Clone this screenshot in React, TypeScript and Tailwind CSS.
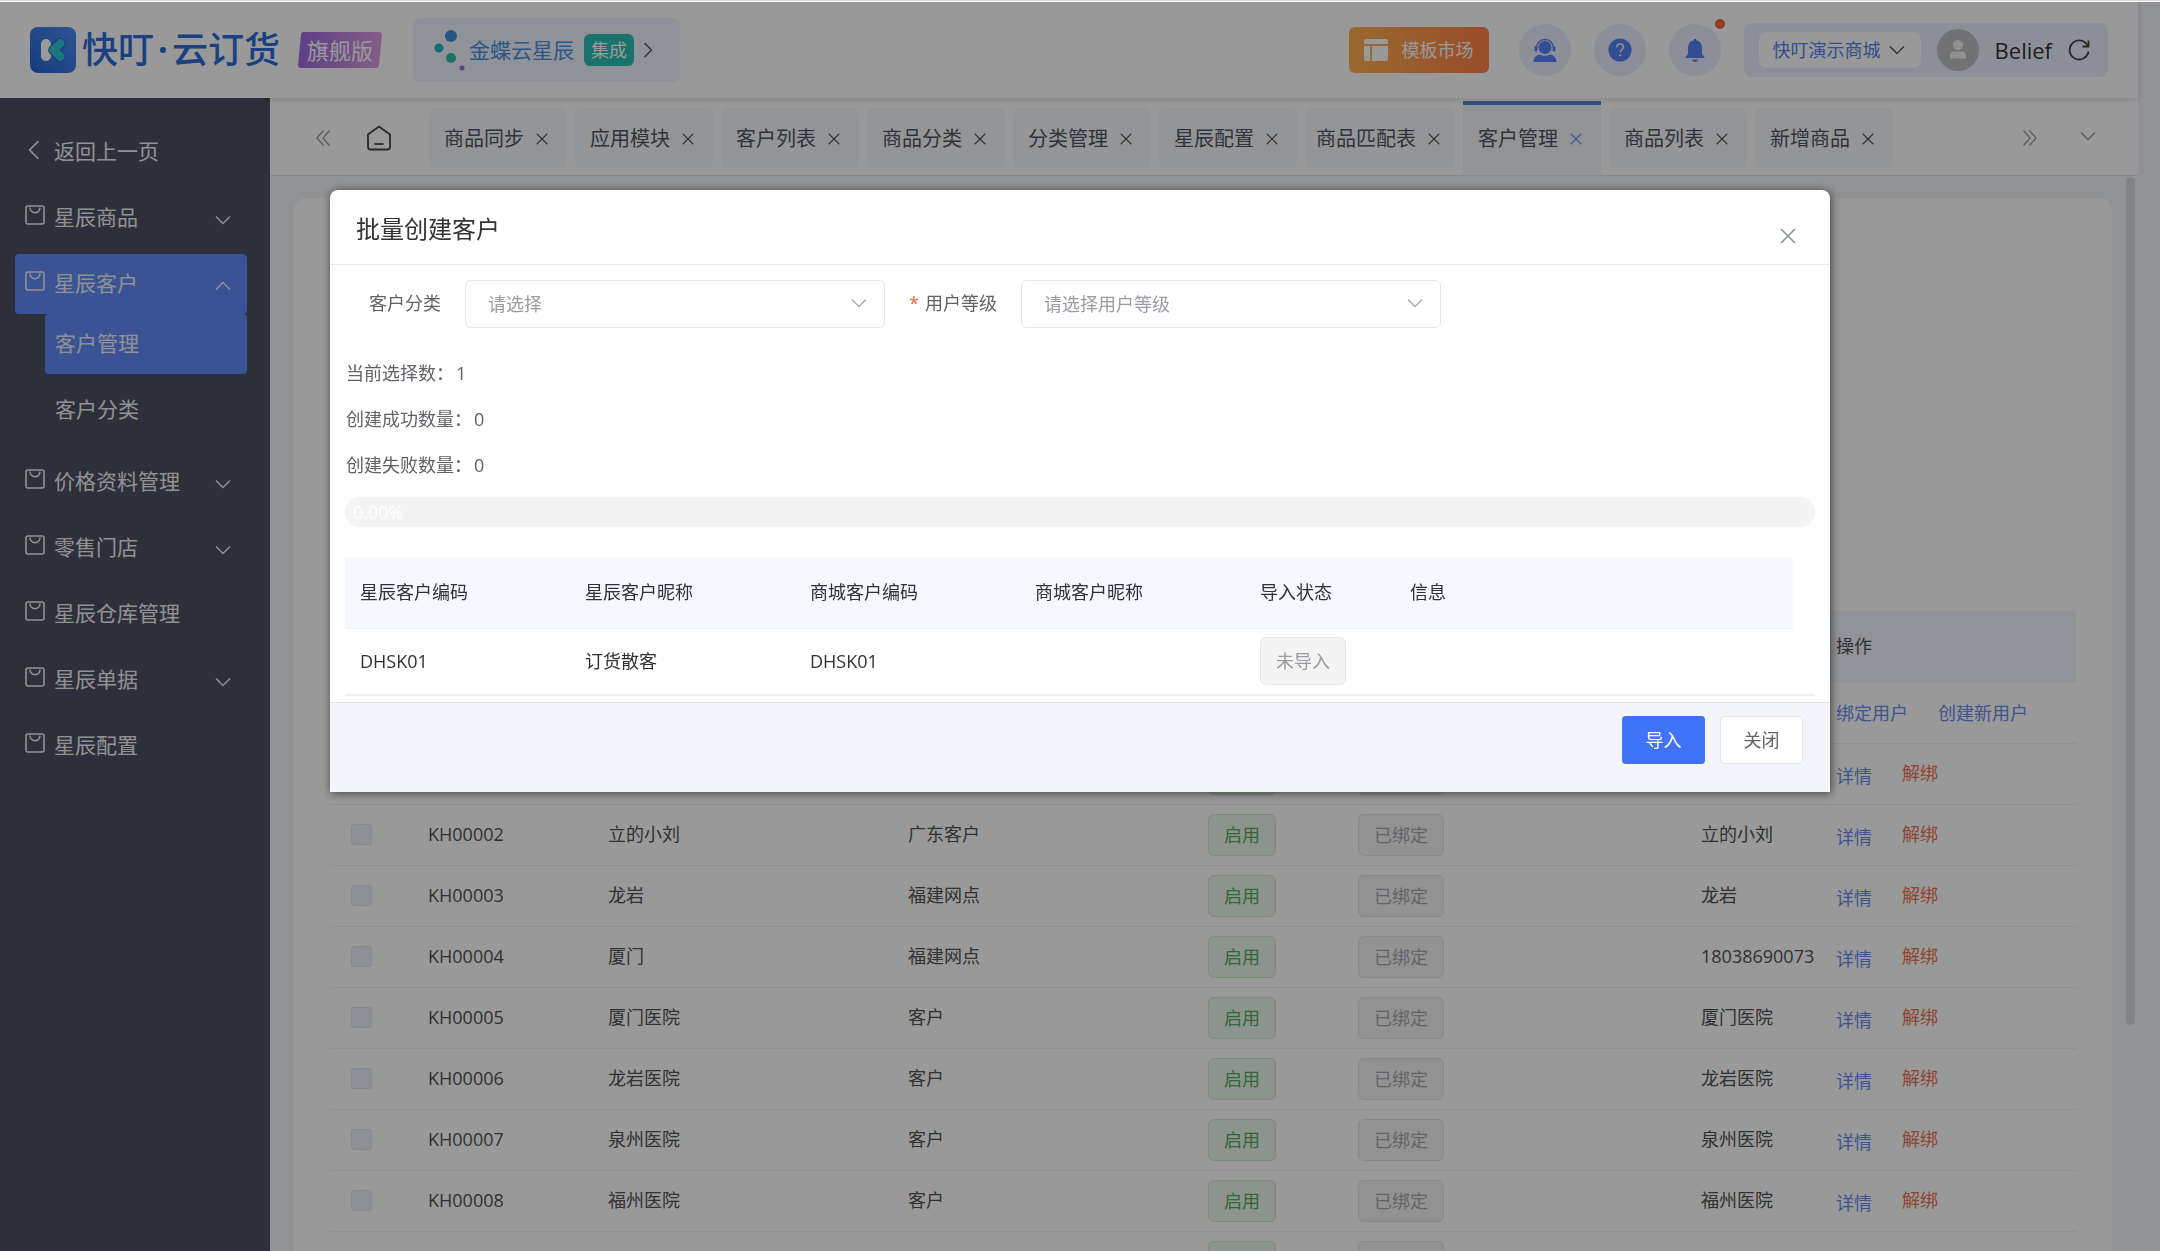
import type { ReactNode } from "react";
import clsx from "clsx";

interface MenuItem {
  label: string;
  arrow?: "up" | "down";
  active?: boolean;
  children?: { label: string; active?: boolean }[];
}

interface Customer {
  code: string;
  name: string;
  category: string;
  mall: string;
  bound: boolean;
}

const menu: MenuItem[] = [
  { label: "星辰商品", arrow: "down" },
  {
    label: "星辰客户",
    arrow: "up",
    active: true,
    children: [{ label: "客户管理", active: true }, { label: "客户分类" }],
  },
  { label: "价格资料管理", arrow: "down" },
  { label: "零售门店", arrow: "down" },
  { label: "星辰仓库管理" },
  { label: "星辰单据", arrow: "down" },
  { label: "星辰配置" },
];

const tabs = [
  "商品同步",
  "应用模块",
  "客户列表",
  "商品分类",
  "分类管理",
  "星辰配置",
  "商品匹配表",
  "客户管理",
  "商品列表",
  "新增商品",
];
const activeTab = "客户管理";

const customers: Customer[] = [
  { code: "DHSK01", name: "订货散客", category: "客户", mall: "", bound: false },
  { code: "KH00001", name: "福建客户", category: "客户", mall: "福建客户", bound: true },
  { code: "KH00002", name: "立的小刘", category: "广东客户", mall: "立的小刘", bound: true },
  { code: "KH00003", name: "龙岩", category: "福建网点", mall: "龙岩", bound: true },
  { code: "KH00004", name: "厦门", category: "福建网点", mall: "18038690073", bound: true },
  { code: "KH00005", name: "厦门医院", category: "客户", mall: "厦门医院", bound: true },
  { code: "KH00006", name: "龙岩医院", category: "客户", mall: "龙岩医院", bound: true },
  { code: "KH00007", name: "泉州医院", category: "客户", mall: "泉州医院", bound: true },
  { code: "KH00008", name: "福州医院", category: "客户", mall: "福州医院", bound: true },
  { code: "KH00009", name: "莆田医院", category: "客户", mall: "莆田医院", bound: true },
];

const stats = [
  { label: "当前选择数：", value: 1 },
  { label: "创建成功数量：", value: 0 },
  { label: "创建失败数量：", value: 0 },
];

const chevronPaths = {
  down: "M1 4.5 8 11.5 15 4.5",
  up: "M1 11.5 8 4.5 15 11.5",
  left: "M11.5 1 4.5 8 11.5 15",
  right: "M4.5 1 11.5 8 4.5 15",
};

function Chevron({ dir, className }: { dir: keyof typeof chevronPaths; className?: string }) {
  return (
    <svg viewBox="0 0 16 16" fill="none" stroke="currentColor" strokeWidth="1.4" className={clsx("size-4 shrink-0", className)}>
      <path d={chevronPaths[dir]} />
    </svg>
  );
}

function DoubleChevron({ dir }: { dir: "left" | "right" }) {
  return (
    <svg viewBox="0 0 16 16" fill="none" stroke="currentColor" strokeWidth="1.2" className="size-4 shrink-0">
      <path d={dir === "left" ? "M8.5 0.5 2 8l6.5 7.5M14.5 0.5 8 8l6.5 7.5" : "M1.5 0.5 8 8l-6.5 7.5M7.5 0.5 14 8l-6.5 7.5"} />
    </svg>
  );
}

function Cross({ className }: { className?: string }) {
  return (
    <svg viewBox="0 0 16 16" fill="none" stroke="currentColor" strokeWidth="1.6" className={clsx("shrink-0", className)}>
      <path d="M1 1l14 14M15 1 1 15" />
    </svg>
  );
}

function BagIcon() {
  return (
    <svg viewBox="0 0 20 20" fill="none" stroke="currentColor" strokeWidth="1.6" className="mb-[6px] size-5 shrink-0">
      <rect x="1" y="1" width="18" height="18" rx="2" />
      <path d="M5 2.5c0 3.2 2.2 5.2 5 5.2s5-2 5-5.2" />
    </svg>
  );
}

function Logo() {
  return (
    <a href="#" className="flex items-center">
      <svg viewBox="0 0 46 46" fill="none" strokeLinecap="round" strokeLinejoin="round" className="size-[46px]">
        <defs>
          <linearGradient id="logoBg" x1="1" y1="0" x2="0" y2="1">
            <stop offset="0" stopColor="#4f8af5" />
            <stop offset="1" stopColor="#2367d2" />
          </linearGradient>
        </defs>
        <rect width="46" height="46" rx="8" fill="url(#logoBg)" />
        <rect x="11" y="12" width="10" height="22" rx="5" fill="#fff" />
        <path d="M30.500 16.300 23.500 23l7 6.700" stroke="#2a64c4" strokeWidth="10.500" />
        <path d="M30.500 16.300 23.500 23l7 6.700" stroke="#2fc4d6" strokeWidth="8.500" />
      </svg>
      <span className="ml-[6px] flex items-center text-[36px] font-medium leading-none text-[#2c6cd8]">
        快叮
        <span className="mx-[6px] size-[6px] rounded-full bg-[#2c6cd8]" />
        云订货
      </span>
    </a>
  );
}

function TopCircle({ label, children }: { label: string; children: ReactNode }) {
  return (
    <button type="button" aria-label={label} className="relative grid size-[52px] place-items-center rounded-full bg-[#e9efff] text-[#5680f5]">
      {children}
    </button>
  );
}

function Header() {
  return (
    <header className="relative z-10 flex h-24 shrink-0 items-center bg-white px-[30px] shadow-[0_1px_6px_rgba(0,0,0,0.15)]">
      <Logo />
      <span className="relative ml-[18px] grid h-9 w-[84px] place-items-center text-[22px] text-white">
        <svg viewBox="0 0 84 36" className="absolute inset-0 h-full w-full">
          <defs>
            <linearGradient id="edition" x1="0" y1="0" x2="1" y2="0">
              <stop offset="0" stopColor="#9b6ae0" />
              <stop offset="1" stopColor="#dd9be0" />
            </linearGradient>
          </defs>
          <path d="M6 0h75q3 0 3 3l-3 30q0 3-3 3H3q-3 0-3-3L3 3q0-3 3-3z" fill="url(#edition)" />
        </svg>
        <span className="relative leading-9">旗舰版</span>
      </span>

      <a href="#" className="ml-[31px] flex h-16 w-[267px] items-center rounded-md bg-[#eef4ff] pl-[21px]">
        <svg viewBox="0 0 32 44" className="h-11 w-8">
          <circle cx="17" cy="8" r="6" fill="#3f8fe0" />
          <circle cx="5" cy="20" r="4.500" fill="#2fb0c8" />
          <circle cx="17" cy="30" r="5" fill="#2fc0a8" />
          <circle cx="28" cy="40" r="2.500" fill="#9b6ae0" />
        </svg>
        <span className="ml-[3px] text-[21px] leading-8 text-[#4a90e2]">金蝶云星辰</span>
        <span className="ml-[10px] rounded-md bg-[#2abfb2] px-[7px] text-[18px] leading-8 text-white">集成</span>
        <Chevron dir="right" className="ml-[6px] text-[#555]" />
      </a>

      <div className="ml-auto flex items-center">
        <button type="button" className="flex h-[46px] items-center gap-[14px] rounded-md bg-linear-to-r from-[#ffb052] to-[#ff7f45] px-[15px] text-[18px] text-white">
          <svg viewBox="0 0 24 22" fill="currentColor" className="h-[22px] w-6">
            <path d="M2 0h20a2 2 0 0 1 2 2v3H0V2a2 2 0 0 1 2-2zM0 7h6v15H2a2 2 0 0 1-2-2zM8 7h16v13a2 2 0 0 1-2 2H8z" />
          </svg>
          模板市场
        </button>
        <div className="ml-[30px] flex gap-[23px]">
          <TopCircle label="客服">
            <svg viewBox="0 0 24 24" fill="currentColor" className="size-6">
              <circle cx="12" cy="9.500" r="6.500" />
              <path d="M3.500 10a8.500 8.500 0 0 1 17 0" fill="none" stroke="currentColor" strokeWidth="1.500" />
              <rect x="1.500" y="8" width="3" height="5.500" rx="1.500" />
              <rect x="19.500" y="8" width="3" height="5.500" rx="1.500" />
              <path d="M0.500 24c0-4.500 3-7 6.500-7.500 2.800 1.800 7.200 1.800 10 0 3.500.5 6.500 3 6.500 7.500z" />
            </svg>
          </TopCircle>
          <TopCircle label="帮助">
            <svg viewBox="0 0 24 24" className="size-6">
              <circle cx="12" cy="12" r="11.500" fill="currentColor" />
              <path d="M8.800 9.300c0-2 1.400-3.300 3.300-3.300s3.300 1.200 3.300 3c0 2.400-3.200 2.700-3.200 5.400" fill="none" stroke="#e9efff" strokeWidth="1.600" />
              <circle cx="12.200" cy="17.300" r="1.100" fill="#e9efff" />
            </svg>
          </TopCircle>
          <TopCircle label="消息">
            <svg viewBox="0 0 24 24" fill="currentColor" className="size-6">
              <path d="M11 2.200V1h2v1.200c3.600.6 6 3.500 6 7.300V16l2.500 3.200v.8h-19v-.8L5 16V9.500c0-3.800 2.400-6.700 6-7.300zM9 21.500h6c-.3 1.500-1.500 2.500-3 2.500s-2.700-1-3-2.500z" />
            </svg>
            <span className="absolute -right-1 -top-[5px] size-[10px] rounded-full bg-[#f2643d]" />
          </TopCircle>
        </div>
        <div className="ml-[23px] flex h-[54px] items-center rounded-lg bg-[#e9efff] pl-[15px] pr-[18px]">
          <button type="button" className="flex h-9 items-center gap-2 rounded-lg bg-white pl-[14px] pr-4 text-[18px] text-[#5680f5]">
            快叮演示商城
            <Chevron dir="down" className="text-[#555]" />
          </button>
          <span className="ml-4 grid size-[42px] place-items-center rounded-full bg-[#bfbfc2]">
            <svg viewBox="0 0 18 20" fill="#f2f2f2" className="h-5 w-[18px]">
              <circle cx="9" cy="5" r="5" />
              <path d="M1 18.500v-3c0-2.500 2-4 4-4h8c2 0 4 1.500 4 4v3z" />
            </svg>
          </span>
          <span className="ml-4 text-[22px] text-[#333]">Belief</span>
          <button type="button" aria-label="刷新" className="ml-4 text-[#444]">
            <svg viewBox="0 0 22 22" fill="none" stroke="currentColor" strokeWidth="1.800" className="size-[22px]">
              <path d="M20 7.500A9.500 9.500 0 1 0 20.500 12.500" />
              <path d="M20.500 1.500v6h-6" />
            </svg>
          </button>
        </div>
      </div>
    </header>
  );
}

function Sidebar() {
  return (
    <nav className="flex w-[270px] shrink-0 flex-col gap-[6px] overflow-hidden bg-[#4b5063] pl-[15px] pr-[23px] pt-6 text-[21px] text-[#f2f2f2]">
      <a href="#" className="flex h-[60px] shrink-0 items-center pl-[9px]">
        <Chevron dir="left" className="mb-1 size-5" />
        <span className="ml-[10px]">返回上一页</span>
      </a>
      {menu.map((item) => (
        <div key={item.label} className={clsx("flex shrink-0 flex-col", item.children && "pb-[6px]")}>
          <a href="#" className={clsx("flex h-[60px] items-center rounded pl-[10px] pr-4", item.active && "bg-[#618af8]")}>
            <BagIcon />
            <span className="ml-[9px]">{item.label}</span>
            {item.arrow && <Chevron dir={item.arrow} className="ml-auto mt-1" />}
          </a>
          {item.children && (
            <div className="ml-[30px] flex flex-col gap-[6px]">
              {item.children.map((child) => (
                <a key={child.label} href="#" className={clsx("flex h-[60px] items-center rounded pl-[10px]", child.active && "bg-[#618af8]")}>
                  {child.label}
                </a>
              ))}
            </div>
          )}
        </div>
      ))}
    </nav>
  );
}

function TabBar() {
  return (
    <div className="flex h-[78px] shrink-0 items-center border-b border-[#e6e8ec] bg-white pl-[45px] pr-[42px] pt-[3px] text-[#999]">
      <button type="button" aria-label="向左">
        <DoubleChevron dir="left" />
      </button>
      <button type="button" aria-label="首页" className="ml-9 text-[#444]">
        <svg viewBox="0 0 24 26" fill="none" stroke="currentColor" strokeWidth="1.800" className="h-[26px] w-6">
          <path d="M1 9.500 12 1.500 23 9.500V22a2.500 2.500 0 0 1-2.500 2.500h-17A2.500 2.500 0 0 1 1 22z" strokeLinejoin="round" />
          <path d="M7.500 19h9" />
        </svg>
      </button>
      <div className="ml-[38px] flex items-center gap-2">
        {tabs.map((tab) => {
          const active = tab === activeTab;
          return (
            <div
              key={tab}
              className={clsx(
                "flex shrink-0 items-center justify-center gap-3 text-[20px] text-[#4d5666]",
                tab.length > 4 ? "w-[150px]" : "w-[138px]",
                active ? "h-[74px] border-t-4 border-[#4f86e0] bg-[#f2f5f9] pb-[2px] pr-1" : "h-[60px] rounded-md bg-[#f6f8fb] pr-1 pt-[2px]",
              )}
            >
              <button type="button">{tab}</button>
              <button type="button" aria-label={`关闭${tab}`} className={active ? "text-[#618af8]" : "text-[#555]"}>
                <Cross className="size-3" />
              </button>
            </div>
          );
        })}
      </div>
      <button type="button" aria-label="向右" className="ml-auto">
        <DoubleChevron dir="right" />
      </button>
      <button type="button" aria-label="更多标签" className="mb-1 ml-[42px]">
        <Chevron dir="down" />
      </button>
    </div>
  );
}

function CustomerTable() {
  return (
    <table className="w-full table-fixed border-collapse text-left text-[18px] text-[#505255]">
      <colgroup>
        <col className="w-[83px]" />
        <col className="w-[180px]" />
        <col className="w-[300px]" />
        <col className="w-[300px]" />
        <col className="w-[150px]" />
        <col />
        <col className="w-[135px]" />
        <col className="w-[255px]" />
      </colgroup>
      <thead>
        <tr className="h-[71px] bg-[#f2f5fd] [&>th]:px-[15px] [&>th]:font-normal">
          <th />
          <th>客户编码</th>
          <th>客户名称</th>
          <th>客户分类</th>
          <th>状态</th>
          <th>绑定状态</th>
          <th>商城客户</th>
          <th>操作</th>
        </tr>
      </thead>
      <tbody>
        {customers.map((c) => (
          <tr key={c.code} className="h-[61px] border-b border-[#f0f0f0] [&>td]:pl-[15px]">
            <td>
              <input
                type="checkbox"
                aria-label={`选择${c.code}`}
                className="ml-[6px] block size-[21px] appearance-none rounded-[3px] border border-[#e2e5ea] bg-[#edf2f9]"
              />
            </td>
            <td>{c.code}</td>
            <td>{c.name}</td>
            <td>{c.category}</td>
            <td>
              <span className="inline-block rounded-md border border-[#cfe8cf] bg-[#ebf7eb] px-[15px] leading-10 text-[#4fae5a]">启用</span>
            </td>
            <td>
              <span className="inline-block rounded-md border border-[#e4e4e6] bg-[#f4f4f5] px-[15px] leading-10 text-[#a5a7ab]">
                {c.bound ? "已绑定" : "未绑定"}
              </span>
            </td>
            <td className="whitespace-nowrap">{c.mall}</td>
            <td className="shadow-[-4px_0_10px_rgba(0,0,0,0.1)] [clip-path:inset(0_0_0_-12px)]">
              <div className="flex gap-[30px] pt-[3px] text-[#6a8cf0]">
                {c.bound ? (
                  <>
                    <a href="#" className="pt-[3px]">详情</a>
                    <a href="#" className="text-[#ee7450]">解绑</a>
                  </>
                ) : (
                  <>
                    <a href="#">绑定用户</a>
                    <a href="#">创建新用户</a>
                  </>
                )}
              </div>
            </td>
          </tr>
        ))}
      </tbody>
    </table>
  );
}

function SelectField({ id, label, placeholder, required }: { id: string; label: string; placeholder: string; required?: boolean }) {
  return (
    <div className="flex items-center">
      <label htmlFor={id} className="mr-6 text-[#606266]">
        {required && <span className="mr-[6px] text-[#f2643d]">*</span>}
        {label}
      </label>
      <div className="relative">
        <select id={id} defaultValue="" className="h-12 w-[420px] appearance-none rounded-md border border-[#e4e6ea] bg-white px-[22px] pt-[2px] text-[#9a9ca1]">
          <option value="">{placeholder}</option>
        </select>
        <Chevron dir="down" className="pointer-events-none absolute right-[18px] top-[15px] text-[#a8abb2]" />
      </div>
    </div>
  );
}

function ImportDialog() {
  return (
    <div className="fixed inset-x-0 bottom-0 top-[2px] z-20 flex items-start justify-center bg-black/40 pt-[15vh]">
      <div role="dialog" aria-labelledby="dialog-title" className="w-[1500px] max-w-full rounded-t-lg bg-white text-[18px] text-[#606266] shadow-[1px_1px_10px_rgba(0,0,0,0.6)]">
        <div className="flex h-[75px] items-center justify-between border-b border-[#e8e8e8] pl-[26px] pr-[34px] pt-1">
          <h2 id="dialog-title" className="text-[24px] text-[#333]">批量创建客户</h2>
          <button type="button" aria-label="关闭" className="mt-[14px] text-[#909399]">
            <Cross className="size-4" />
          </button>
        </div>

        <div className="px-[15px] pb-[6px] pt-[15px]">
          <form className="flex items-center gap-6 pl-6">
            <SelectField id="category" label="客户分类" placeholder="请选择" />
            <SelectField id="level" label="用户等级" placeholder="请选择用户等级" required />
          </form>

          <div className="mt-[22px] pl-px leading-[46px]">
            {stats.map((s) => (
              <p key={s.label}>
                {s.label}
                <span className="ml-[2px]">{s.value}</span>
              </p>
            ))}
          </div>

          <div className="mt-[9px] h-[30px] rounded-full bg-[#f4f4f4] px-2 leading-[30px] text-white">0.00%</div>

          <table className="mt-[30px] w-full table-fixed border-collapse text-left text-[#303133]">
            <colgroup>
              <col className="w-[225px]" />
              <col className="w-[225px]" />
              <col className="w-[225px]" />
              <col className="w-[225px]" />
              <col className="w-[150px]" />
              <col />
              <col className="w-[22px]" />
            </colgroup>
            <thead>
              <tr className="h-[72px] [&>th]:border-b [&>th]:border-[#eef1f6] [&>th]:bg-[#f5f8ff] [&>th]:px-[15px] [&>th]:font-normal">
                <th>星辰客户编码</th>
                <th>星辰客户昵称</th>
                <th>商城客户编码</th>
                <th>商城客户昵称</th>
                <th>导入状态</th>
                <th>信息</th>
                <td />
              </tr>
            </thead>
            <tbody>
              <tr className="h-[66px] border-b-2 border-[#f0f0f0] [&>td]:px-[15px]">
                <td>DHSK01</td>
                <td>订货散客</td>
                <td>DHSK01</td>
                <td />
                <td>
                  <span className="inline-block rounded-md border border-[#e6e6e8] bg-[#f4f4f5] px-[15px] leading-[46px] text-[#9a9ca1]">未导入</span>
                </td>
                <td colSpan={2} />
              </tr>
            </tbody>
          </table>
        </div>

        <div className="flex h-[90px] items-start justify-end gap-[15px] border-t border-[#e2e3e6] bg-[#f4f5fa] pr-[27px] pt-[13px]">
          <button type="button" className="h-12 w-[83px] rounded bg-[#4073fa] pt-[2px] text-white">导入</button>
          <button type="button" className="h-12 w-[83px] rounded border border-[#e4e6ea] bg-white pt-[2px]">关闭</button>
        </div>
      </div>
    </div>
  );
}

export default function App() {
  return (
    <div className="flex h-screen flex-col overflow-hidden border-t border-[#dcdcdc] bg-[#f1f4fa] pr-[22px] pt-px font-['Open_Sans','Noto_Sans_CJK_SC',sans-serif]">
      <div className="fixed inset-x-0 top-px z-30 h-px bg-white" />
      <Header />
      <div className="flex min-h-0 flex-1">
        <Sidebar />
        <main className="flex min-w-0 flex-1 flex-col">
          <TabBar />
          <div className="relative min-h-0 flex-1 overflow-hidden bg-[#f1f3f6] pl-6 pr-[26px] pt-[22px]">
            <section className="rounded-t-xl bg-white px-9 pt-[413px]">
              <CustomerTable />
            </section>
            <div className="absolute right-[3px] top-px h-[848px] w-[9px] rounded-full bg-[#dadbde]" />
          </div>
        </main>
      </div>
      <ImportDialog />
    </div>
  );
}
